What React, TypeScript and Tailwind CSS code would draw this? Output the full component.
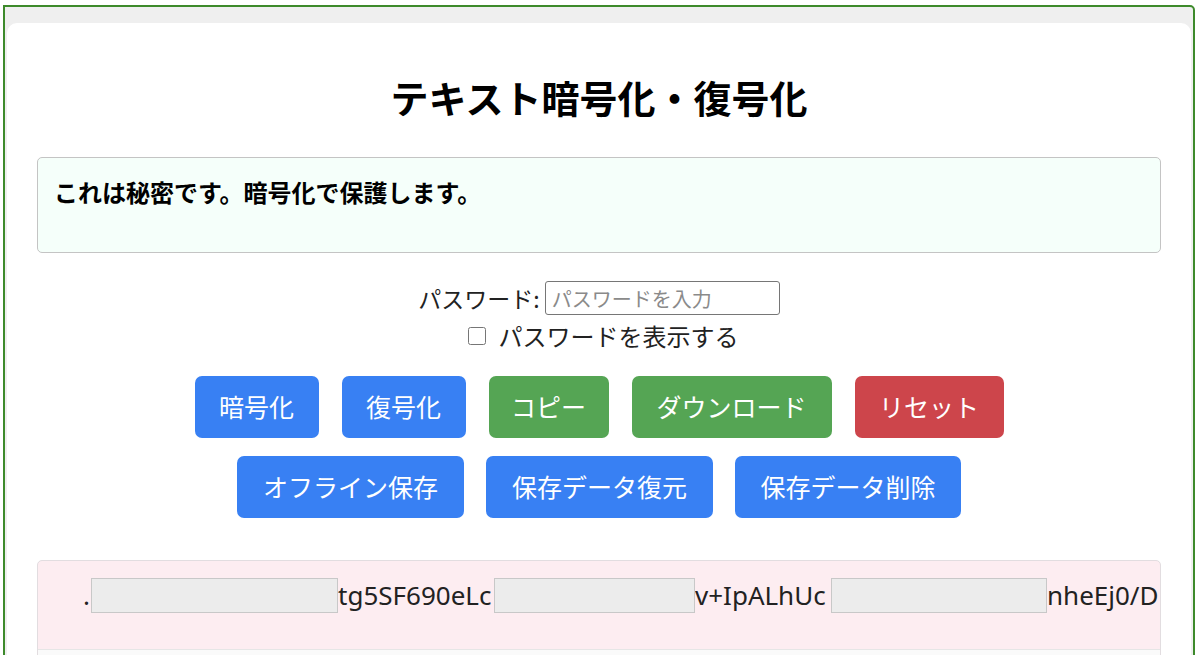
import { useState } from 'react';

const jp = { fontFamily: '"Noto Sans CJK JP", "Noto Sans", sans-serif' };

interface ActionButtonProps {
  label: string;
  color: 'blue' | 'green' | 'red';
  width: string;
}

function ActionButton({ label, color, width }: ActionButtonProps) {
  const bg =
    color === 'blue' ? 'bg-[#3880f3]' : color === 'green' ? 'bg-[#55a554]' : 'bg-[#cd454b]';
  return (
    <button
      className={`${bg} ${width} h-[62px] rounded-[7px] text-center text-[25px] leading-none text-white`}
      style={jp}
    >
      {label}
    </button>
  );
}

export default function App() {
  const [plain, setPlain] = useState('これは秘密です。暗号化で保護します。');
  const [password, setPassword] = useState('');
  const [showPassword, setShowPassword] = useState(false);

  return (
    <div className="h-[655px] overflow-hidden bg-white pl-[3px] pr-[5px] pt-[5px]" style={jp}>
      <div className="h-[720px] rounded-tr-[5px] border-2 border-[#3d8a2b] bg-[#efefef] px-[2px] pt-[16px]">
        <div className="h-full rounded-t-[10px] bg-white px-[30px] pt-[50px]">
          {/* Title */}
          <h1 className="text-center text-[38px] font-bold leading-[48px] text-black">
            テキスト暗号化・復号化
          </h1>

          {/* Plain text */}
          <textarea
            value={plain}
            onChange={(e) => setPlain(e.target.value)}
            className="mt-[36px] block h-[96px] w-full resize-none rounded-[5px] border border-[#c4c4c4] bg-[#f5fffa] px-[16px] py-[18px] text-[24px] font-bold leading-[32px] text-black outline-none"
            style={jp}
          />

          {/* Password */}
          <div className="mt-[28px] flex items-center justify-center gap-[5px] text-[23px] text-[#222]">
            <span>パスワード:</span>
            <input
              type={showPassword ? 'text' : 'password'}
              value={password}
              onChange={(e) => setPassword(e.target.value)}
              placeholder="パスワードを入力"
              className="h-[34px] w-[235px] rounded-[3px] border border-[#767676] px-[6px] text-[20px] text-black outline-none placeholder:text-[#8a8a8a]"
              style={jp}
            />
          </div>
          <label className="mt-[2px] flex items-center justify-center gap-[13px] pl-[8px] text-[24px] leading-[36px] text-[#222]">
            <input
              type="checkbox"
              checked={showPassword}
              onChange={(e) => setShowPassword(e.target.checked)}
              className="h-[18px] w-[18px]"
            />
            <span>パスワードを表示する</span>
          </label>

          {/* Buttons */}
          <div className="mt-[22px] flex justify-center gap-[23px]">
            <ActionButton label="暗号化" color="blue" width="w-[124px]" />
            <ActionButton label="復号化" color="blue" width="w-[124px]" />
            <ActionButton label="コピー" color="green" width="w-[120px]" />
            <ActionButton label="ダウンロード" color="green" width="w-[200px]" />
            <ActionButton label="リセット" color="red" width="w-[149px]" />
          </div>
          <div className="mt-[18px] flex justify-center gap-[22px]">
            <ActionButton label="オフライン保存" color="blue" width="w-[227px]" />
            <ActionButton label="保存データ復元" color="blue" width="w-[227px]" />
            <ActionButton label="保存データ削除" color="blue" width="w-[226px]" />
          </div>

          {/* Cipher text output */}
          <div className="mt-[42px] overflow-hidden rounded-[5px] border border-[#e2dde0] bg-[#fdedf1]">
            <div
              className="flex h-[88px] items-start overflow-hidden whitespace-nowrap pl-[45px] pt-[17px] text-[26px] leading-[35px] text-[#222]"
              style={{ fontFamily: '"Noto Sans", sans-serif' }}
            >
              <span className="inline-block w-[8px] shrink-0 overflow-hidden">.l</span>
              <span className="inline-block h-[35px] w-[247px] shrink-0 border border-[#c8c8c8] bg-[#ececec]" />
              <span className="inline-block w-[156px] shrink-0 overflow-hidden">tg5SF690eLc</span>
              <span className="inline-block h-[35px] w-[201px] shrink-0 border border-[#c8c8c8] bg-[#ececec]" />
              <span className="inline-block w-[136px] shrink-0 overflow-hidden">v+IpALhUc</span>
              <span className="inline-block h-[35px] w-[216px] shrink-0 border border-[#c8c8c8] bg-[#ececec]" />
              <span>nheEj0/DF</span>
            </div>
            <div className="h-[30px] border-t border-[#e6e6e6] bg-[#fafafa]" />
          </div>
        </div>
      </div>
    </div>
  );
}
